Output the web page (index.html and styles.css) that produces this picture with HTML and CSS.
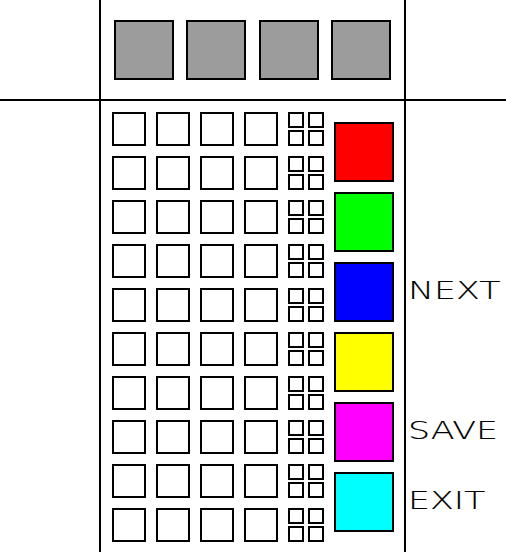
FILE: index.html
```html
<!DOCTYPE html>
<html>

  <head>
    <link rel="stylesheet" href="styles.css">
  </head>

  <body>
    <div class="screen">
      <div class="cell"></div>

      <div class="cell secret">
        <div class="hidden-peg"></div>
        <div class="hidden-peg"></div>
        <div class="hidden-peg"></div>
        <div class="hidden-peg"></div>
      </div>

      <div class="cell"></div>

      <div class="cell"></div>

      <div class="cell board">
        <div class="guesses">
          <div class="guess"><div class="hole"></div><div class="hole"></div><div class="hole"></div><div class="hole"></div><div class="hints"><div class="hint"></div><div class="hint"></div><div class="hint"></div><div class="hint"></div></div></div>
          <div class="guess"><div class="hole"></div><div class="hole"></div><div class="hole"></div><div class="hole"></div><div class="hints"><div class="hint"></div><div class="hint"></div><div class="hint"></div><div class="hint"></div></div></div>
          <div class="guess"><div class="hole"></div><div class="hole"></div><div class="hole"></div><div class="hole"></div><div class="hints"><div class="hint"></div><div class="hint"></div><div class="hint"></div><div class="hint"></div></div></div>
          <div class="guess"><div class="hole"></div><div class="hole"></div><div class="hole"></div><div class="hole"></div><div class="hints"><div class="hint"></div><div class="hint"></div><div class="hint"></div><div class="hint"></div></div></div>
          <div class="guess"><div class="hole"></div><div class="hole"></div><div class="hole"></div><div class="hole"></div><div class="hints"><div class="hint"></div><div class="hint"></div><div class="hint"></div><div class="hint"></div></div></div>
          <div class="guess"><div class="hole"></div><div class="hole"></div><div class="hole"></div><div class="hole"></div><div class="hints"><div class="hint"></div><div class="hint"></div><div class="hint"></div><div class="hint"></div></div></div>
          <div class="guess"><div class="hole"></div><div class="hole"></div><div class="hole"></div><div class="hole"></div><div class="hints"><div class="hint"></div><div class="hint"></div><div class="hint"></div><div class="hint"></div></div></div>
          <div class="guess"><div class="hole"></div><div class="hole"></div><div class="hole"></div><div class="hole"></div><div class="hints"><div class="hint"></div><div class="hint"></div><div class="hint"></div><div class="hint"></div></div></div>
          <div class="guess"><div class="hole"></div><div class="hole"></div><div class="hole"></div><div class="hole"></div><div class="hints"><div class="hint"></div><div class="hint"></div><div class="hint"></div><div class="hint"></div></div></div>
          <div class="guess"><div class="hole"></div><div class="hole"></div><div class="hole"></div><div class="hole"></div><div class="hints"><div class="hint"></div><div class="hint"></div><div class="hint"></div><div class="hint"></div></div></div>
        </div>

        <div class="palette">
          <div class="color red"></div>
          <div class="color green"></div>
          <div class="color blue"></div>
          <div class="color yellow"></div>
          <div class="color magenta"></div>
          <div class="color cyan"></div>
        </div>
      </div>

      <div class="cell menu">
        <div class="menu-slot"></div>
        <div class="menu-slot"></div>
        <div class="menu-slot"><span class="menu-item">NEXT</span></div>
        <div class="menu-slot"></div>
        <div class="menu-slot"><span class="menu-item">SAVE</span></div>
        <div class="menu-slot"><span class="menu-item">EXIT</span></div>
      </div>
    </div>
  </body>

</html>
```

FILE: styles.css
```css
html,
body {
  margin: 0;
  background-color: white;
}

body {
  font-family: "DejaVu Sans", sans-serif;
}

.screen {
  display: grid;
  grid-template-columns: 99px 303px 100px;
  grid-template-rows: 99px 451px;
  gap: 2px;
  width: 506px;
  height: 552px;
  background-color: black;
}

.cell {
  background-color: white;
}

.secret {
  display: flex;
  justify-content: space-evenly;
  padding-top: 20px;
  box-sizing: border-box;
}

.hidden-peg {
  width: 60px;
  height: 60px;
  box-sizing: border-box;
  border: 2px solid black;
  background-color: #9c9c9c;
}

.board {
  display: flex;
  align-items: center;
  gap: 10px;
  padding: 0 10px 0 11px;
}

.guesses {
  display: flex;
  flex-direction: column;
  gap: 10px;
}

.guess {
  display: flex;
  gap: 10px;
}

.hole {
  width: 34px;
  height: 34px;
  box-sizing: border-box;
  border: 2px solid black;
}

.hints {
  display: grid;
  grid-template-columns: 16px 16px;
  grid-template-rows: 16px 16px;
  column-gap: 4px;
  row-gap: 2px;
}

.hint {
  box-sizing: border-box;
  border: 2px solid black;
}

.palette {
  display: flex;
  flex-direction: column;
  gap: 10px;
}

.color {
  width: 60px;
  height: 60px;
  box-sizing: border-box;
  border: 2px solid black;
}

.red { background-color: #ff0000; }
.green { background-color: #00ff00; }
.blue { background-color: #0000ff; }
.yellow { background-color: #ffff00; }
.magenta { background-color: #ff00ff; }
.cyan { background-color: #00ffff; }

.menu {
  display: flex;
  flex-direction: column;
  gap: 10px;
  padding: 21px 0 0 2px;
}

.menu-slot {
  height: 60px;
  display: flex;
  align-items: center;
}

.menu-item {
  display: inline-block;
  margin-top: -2px;
  font-size: 24px;
  font-weight: 200;
  line-height: 1;
  color: black;
  -webkit-text-stroke: 0.15px black;
  transform: scaleX(1.45);
  transform-origin: left center;
}
```
